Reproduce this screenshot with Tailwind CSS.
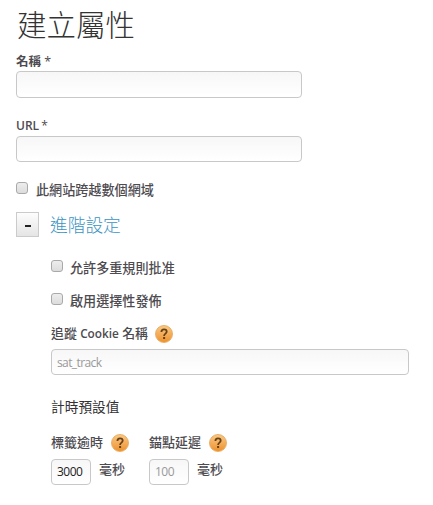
<!DOCTYPE html>
<html lang="zh-Hant">
<head>
<meta charset="utf-8">
<title>建立屬性</title>
<script src="https://cdn.jsdelivr.net/npm/@tailwindcss/browser@4"></script>
</head>
<body class="h-[505px] w-[433px] overflow-hidden bg-white font-['Open_Sans','Noto_Sans_CJK_TC',sans-serif] text-xs text-[#4d4b50]">
<svg class="hidden">
  <symbol id="help" viewBox="1 1 16 16">
    <path d="M6.4 7C6.4 5.2 7.5 4.4 9 4.4c1.6 0 2.7.9 2.7 2.3 0 1.9-2.6 2-2.6 4.2" fill="none" stroke="#68401a" stroke-width="1.8"/>
    <rect x="8.1" y="12" width="2" height="2" fill="#68401a"/>
  </symbol>
</svg>
<form class="flex flex-col pl-4">
  <h1 class="flex h-[50px] items-center pl-px text-[29.5px] leading-[50px] font-light text-[#333]">建立屬性</h1>
  <label class="h-[21px] text-[12.5px] leading-[23px] font-semibold whitespace-nowrap">名稱 <span class="font-normal">*</span></label>
  <input class="h-[27px] w-[286px] rounded-[4px] border border-[#c8c8c8] bg-linear-to-b from-[#f7f7f7] to-white">
  <label class="mt-[17px] h-[21px] text-xs leading-[21px] font-semibold">URL <span class="-ml-px font-normal">*</span></label>
  <input class="h-[26px] w-[286px] rounded-[4px] border border-[#c8c8c8] bg-linear-to-b from-[#f7f7f7] to-white">

  <label class="mt-4 flex h-6 items-start text-[13.1px] leading-6 font-medium">
    <span class="mt-[4px] mr-2 size-3 rounded-[3px] border border-[#a9a9a9] bg-linear-to-b from-[#ededed] to-[#dcdcdc]"></span>此網站跨越數個網域
  </label>

  <div class="mt-[10px] flex h-[25px] items-center">
    <button type="button" class="flex h-[25px] w-[23px] items-center justify-center border border-[#cbcbcb] bg-linear-to-b from-[#fdfdfd] to-[#e5e5e5]"><span class="mt-[3px] h-[2px] w-[6px] bg-[#222]"></span></button>
    <h2 class="ml-[11px] pt-px text-[17.7px] leading-[25px] font-light text-[#3b94c4]">進階設定</h2>
  </div>

  <div class="flex flex-col pl-[35px]">
    <label class="mt-[19px] flex h-6 items-start text-[13.1px] leading-[25px] font-medium">
      <span class="mt-[4px] mr-[7px] size-3 rounded-[3px] border border-[#a9a9a9] bg-linear-to-b from-[#ededed] to-[#dcdcdc]"></span>允許多重規則批准
    </label>
    <label class="mt-[9px] flex h-6 items-start text-[13.1px] leading-[25px] font-medium">
      <span class="mt-[4px] mr-[7px] size-3 rounded-[3px] border border-[#a9a9a9] bg-linear-to-b from-[#ededed] to-[#dcdcdc]"></span>啟用選擇性發佈
    </label>
    <div class="mt-[8px] flex h-[26px] items-center gap-[7px] text-[12.9px] font-medium">
      <span><span>追蹤</span> <span class="text-[11.8px] font-semibold">Cookie</span> <span>名稱</span></span>
      <svg class="size-[18px] rounded-full border border-[#e9ad66] bg-linear-to-b from-[#f8c880] to-[#ee9228]"><use href="#help"/></svg>
    </div>
    <input class="mt-[2px] h-[26px] w-[358px] rounded-[4px] border border-[#c8c8c8] bg-linear-to-b from-[#f7f7f7] to-white px-[5px] text-[12px] tracking-[-0.6px] placeholder:text-[#999]" placeholder="sat_track">
    <h3 class="mt-5 h-6 text-[13.7px] leading-6 text-[#333]">計時預設值</h3>
    <div class="mt-[11px] flex">
      <div class="w-[98px]">
        <div class="flex h-[26px] items-center gap-2 text-[13px] font-medium">標籤逾時<svg class="size-[18px] rounded-full border border-[#e9ad66] bg-linear-to-b from-[#f8c880] to-[#ee9228]"><use href="#help"/></svg></div>
        <div class="mt-[2px] flex h-[27px] items-center gap-2 text-[13px] font-medium">
          <input class="h-[26px] w-10 rounded-[4px] border border-[#c8c8c8] bg-linear-to-b from-[#f7f7f7] to-white px-[5px] text-[12px] font-normal tracking-[-0.5px] text-[#222]" value="3000"><span class="-mt-[3px]">毫秒</span>
        </div>
      </div>
      <div>
        <div class="flex h-[26px] items-center gap-2 text-[13px] font-medium">錨點延遲<svg class="size-[18px] rounded-full border border-[#e9ad66] bg-linear-to-b from-[#f8c880] to-[#ee9228]"><use href="#help"/></svg></div>
        <div class="mt-[2px] flex h-[27px] items-center gap-2 text-[13px] font-medium">
          <input class="h-[26px] w-10 rounded-[4px] border border-[#c8c8c8] bg-linear-to-b from-[#f7f7f7] to-white px-[5px] text-[12px] font-normal tracking-[-0.5px] placeholder:text-[#999]" placeholder="100"><span class="-mt-[3px]">毫秒</span>
        </div>
      </div>
    </div>
  </div>
</form>
</body>
</html>
